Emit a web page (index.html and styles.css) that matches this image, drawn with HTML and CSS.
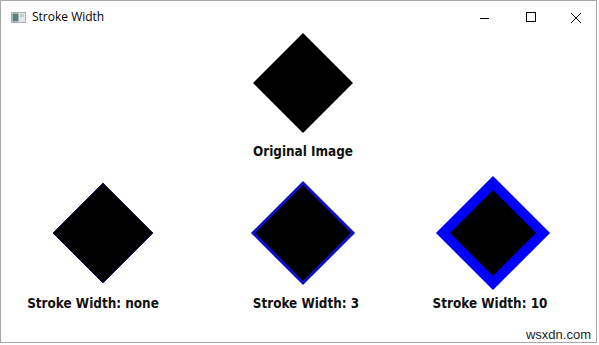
FILE: index.html
```html
<!DOCTYPE html>
<html>
<head>
<meta charset="utf-8">
<title>Stroke Width</title>
<link rel="stylesheet" href="styles.css">
</head>
<body>
<div class="window">
  <div class="titlebar">
    <svg class="app-icon" width="15" height="11" viewBox="0 0 15 11">
      <rect x="0.5" y="0.5" width="14" height="10" fill="#e4e8e8" stroke="#a8b0b0"/>
      <rect x="1.5" y="1.5" width="6" height="8" fill="#5f7f80"/>
      <rect x="9" y="2" width="4" height="3" fill="#c4cccc"/>
    </svg>
    <span class="title">Stroke Width</span>
    <div class="controls">
      <svg class="ctl" width="46" height="30" viewBox="0 0 46 30"><path d="M22 17.5H31" stroke="#000" stroke-width="1"/></svg>
      <svg class="ctl" width="46" height="30" viewBox="0 0 46 30"><rect x="22.5" y="11.5" width="9" height="9" fill="none" stroke="#000" stroke-width="1"/></svg>
      <svg class="ctl" width="46" height="30" viewBox="0 0 46 30"><path d="M21 12L31 22M31 12L21 22" stroke="#000" stroke-width="1"/></svg>
    </div>
  </div>
  <div class="content">
    <div class="top">
      <svg class="shape-top" width="100" height="100" viewBox="-50 -50 100 100">
        <polygon points="0,-50 50,0 0,50 -50,0" fill="#000"/>
      </svg>
      <div class="label">Original Image</div>
    </div>
    <div class="bottom">
      <div class="cell c1">
        <svg width="120" height="120" viewBox="-60 -60 120 120">
          <polygon points="0,-50 50,0 0,50 -50,0" fill="#000" stroke="#1a1a60" stroke-width="1"/>
        </svg>
        <div class="label l1">Stroke Width: none</div>
      </div>
      <div class="cell c2">
        <svg width="120" height="120" viewBox="-60 -60 120 120">
          <polygon points="0,-50 50,0 0,50 -50,0" fill="#000" stroke="#1010c8" stroke-width="3"/>
        </svg>
        <div class="label l2">Stroke Width: 3</div>
      </div>
      <div class="cell c3">
        <svg width="120" height="120" viewBox="-60 -60 120 120">
          <polygon points="0,-50 50,0 0,50 -50,0" fill="#000" stroke="#0000ff" stroke-width="10"/>
        </svg>
        <div class="label l3">Stroke Width: 10</div>
      </div>
    </div>
  </div>
  <div class="watermark">wsxdn.com</div>
</div>
</body>
</html>
```
FILE: styles.css
```css
html, body {
  margin: 0;
  padding: 0;
  background: #ffffff;
}
.window {
  position: relative;
  width: 595px;
  height: 341px;
  border: 1px solid #a6a6a6;
  background: #ffffff;
  overflow: hidden;
}
.titlebar {
  display: flex;
  align-items: center;
  height: 30px;
}
.app-icon {
  margin-left: 10px;
  margin-top: 2px;
  flex: none;
}
.title {
  margin-left: 6px;
  font-family: "Open Sans", "Liberation Sans", sans-serif;
  font-size: 12px;
  color: #000;
  margin-top: 1px;
}
.controls {
  margin-left: auto;
  display: flex;
}
.ctl {
  display: block;
}
.content {
  display: flex;
  flex-direction: column;
}
.top {
  display: flex;
  flex-direction: column;
  align-items: center;
  padding-top: 2px;
  margin-left: 9px;
}
.shape-top {
  display: block;
}
.label {
  font-family: "DejaVu Sans Condensed", "DejaVu Sans", sans-serif;
  font-weight: bold;
  font-size: 13.4px;
  line-height: 16px;
  color: #111;
  white-space: nowrap;
}
.top .label {
  margin-top: 11px;
}
.bottom {
  display: flex;
  margin-top: 13px;
}
.cell {
  display: flex;
  flex-direction: column;
  align-items: center;
  width: 120px;
}
.cell svg {
  display: block;
}
.cell .label {
  margin-top: 3px;
}
.c1 {
  margin-left: 42px;
}
.c2 {
  margin-left: 80px;
}
.c3 {
  margin-left: 70px;
}
.l1 {
  margin-right: 20px;
}
.l2 {
  margin-left: 6px;
}
.l3 {
  margin-right: 6px;
}
.watermark {
  position: absolute;
  right: 5px;
  bottom: 0;
  font-family: "Liberation Sans", Arial, sans-serif;
  font-size: 13px;
  color: #222;
}
```
